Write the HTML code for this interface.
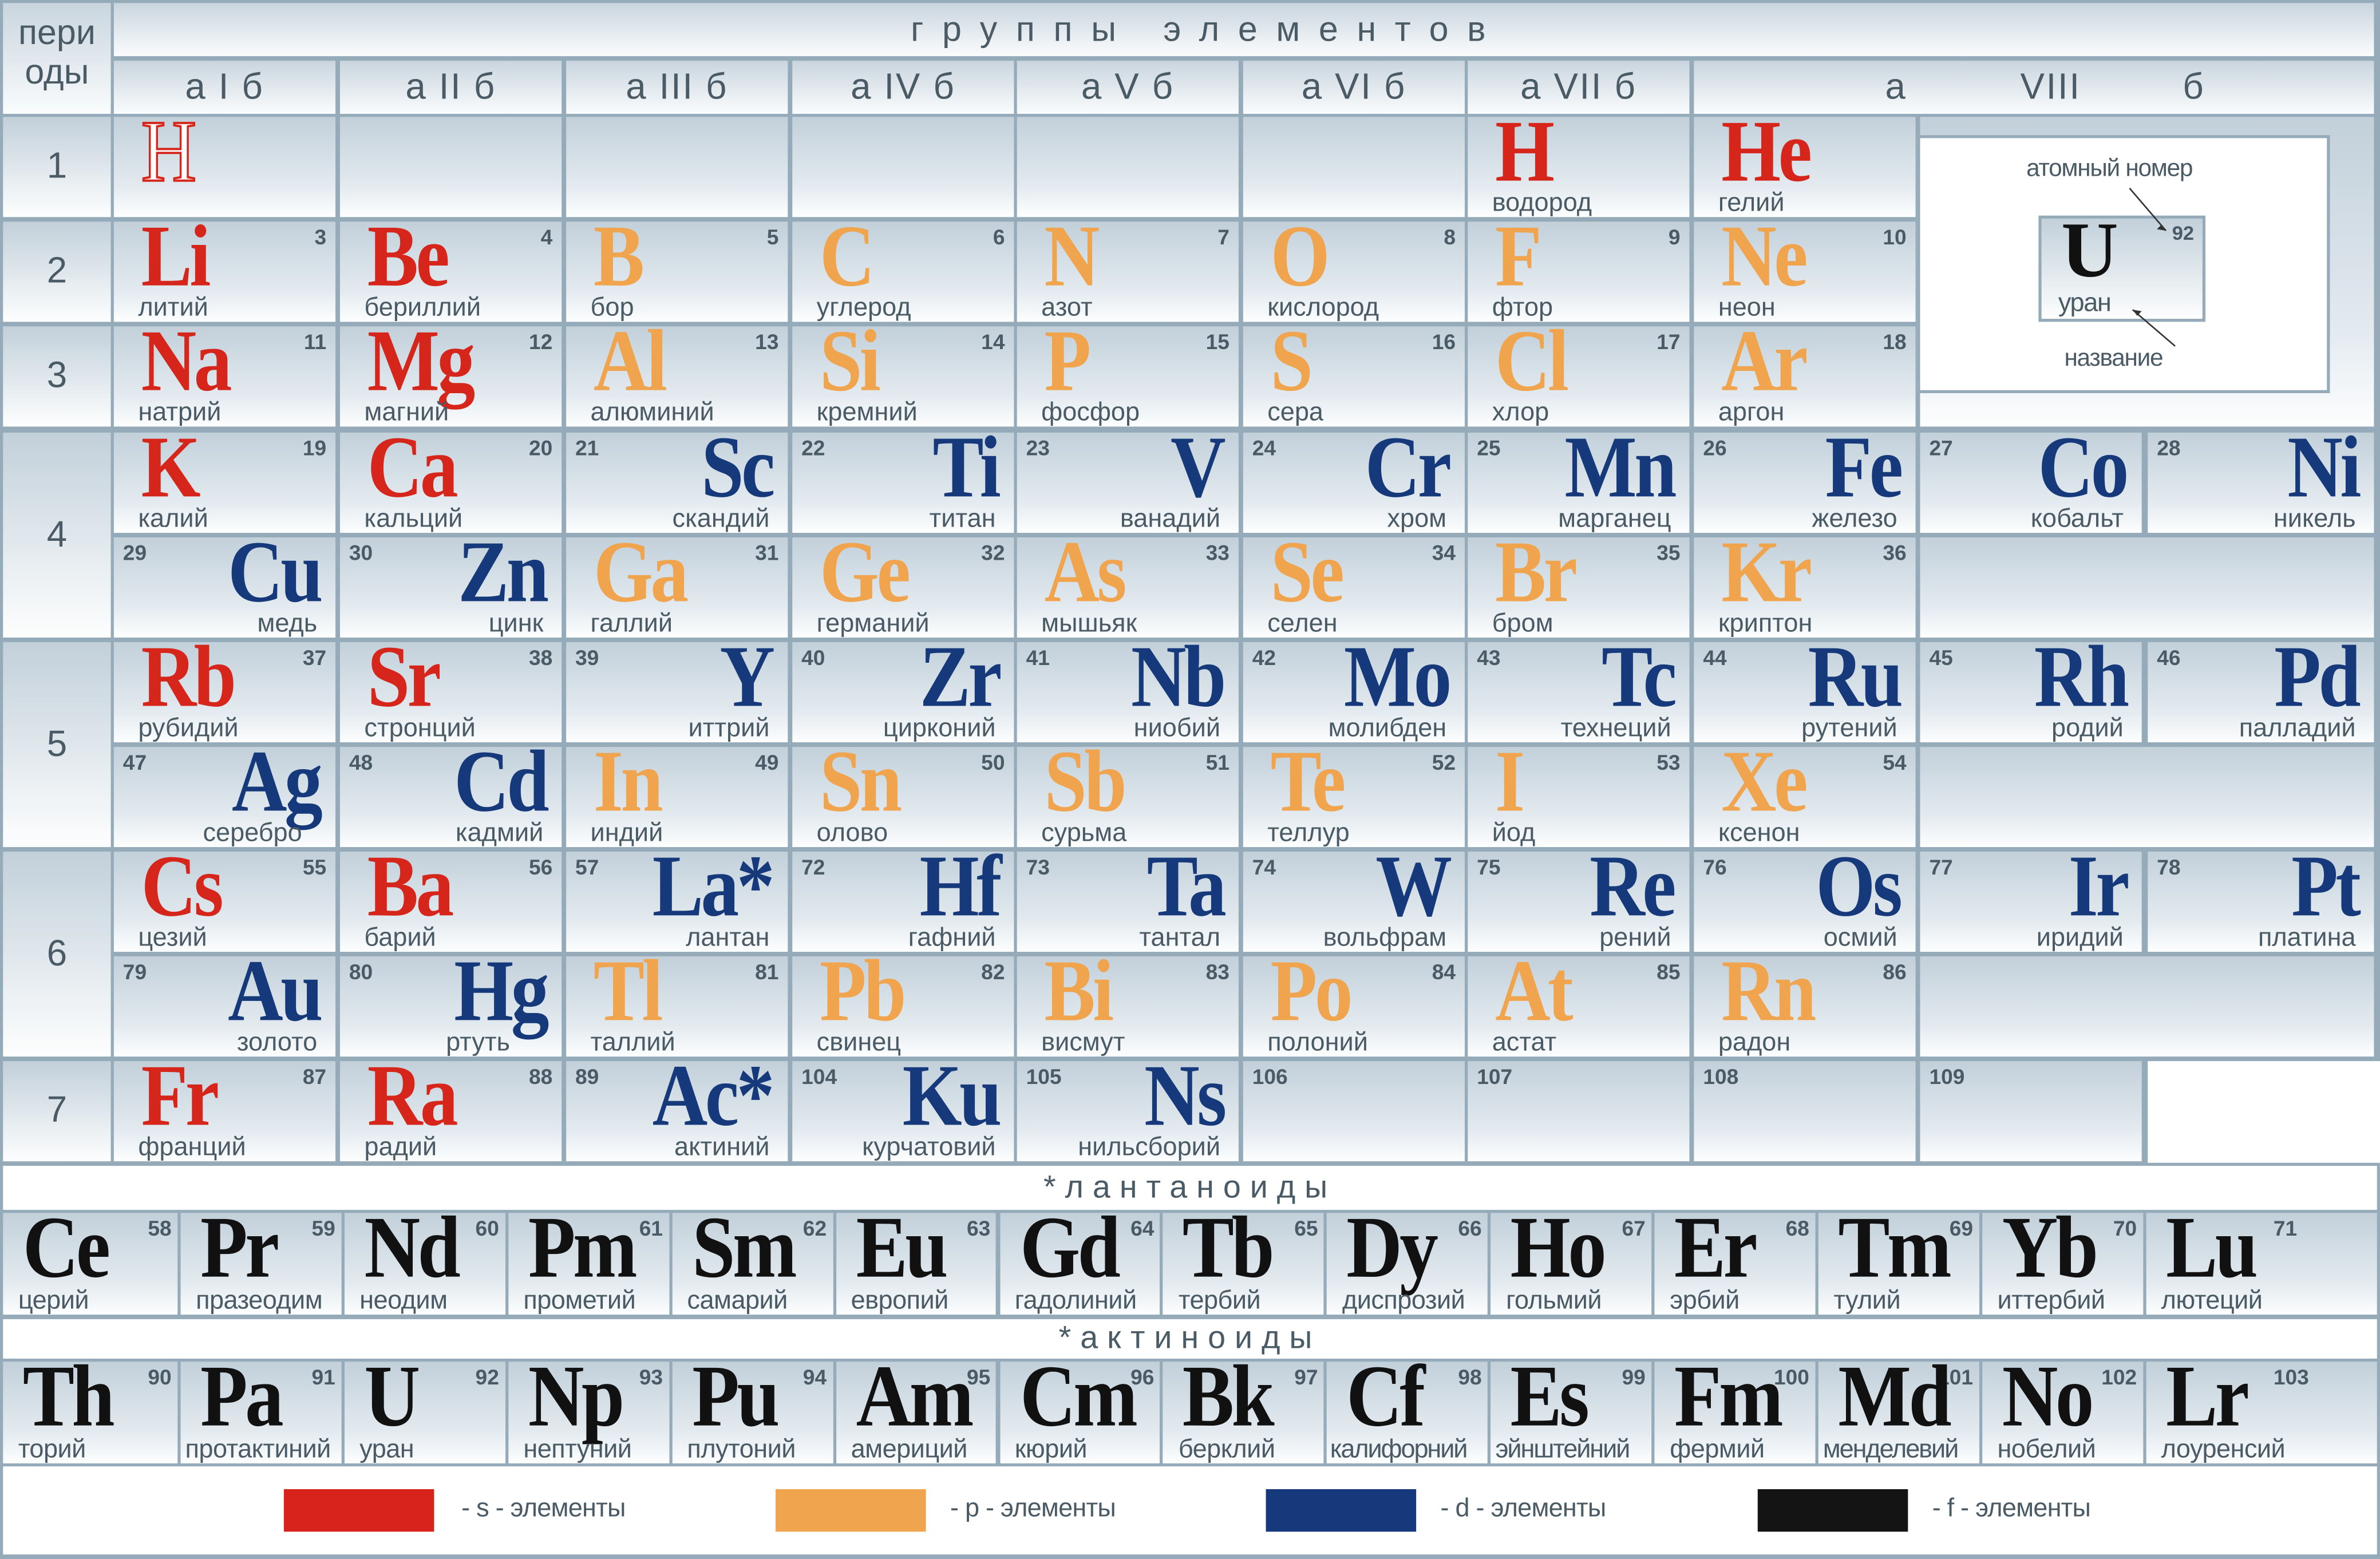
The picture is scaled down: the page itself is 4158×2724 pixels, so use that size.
<!DOCTYPE html>
<html><head><meta charset="utf-8"><style>
html,body{margin:0;padding:0;width:4158px;height:2724px;overflow:hidden;background:#fff}
#p{position:absolute;left:0;top:0;width:1568px;height:1027px;background:#96abba;transform-origin:0 0;transform:scale(2.6518,2.6524);font-family:"Liberation Sans","DejaVu Sans",sans-serif;color:#4a5b66}
.c{position:absolute;width:146px;height:66px;background:linear-gradient(#c2d0da,#e4ebf0 70%,#fdfefe);overflow:hidden}
.x0{left:75px}.x1{left:224px}.x2{left:373px}.x3{left:522px}.x4{left:670px}.x5{left:819px}.x6{left:967px}.x7{left:1116px}.x8{left:1265px}.x9{left:1415px;width:149px}
.y0{top:77px}.y1{top:146px}.y2{top:215px}.y3{top:285px}.y4{top:354px}.y5{top:423px}.y6{top:492px}.y7{top:561px}.y8{top:630px}.y9{top:699px}
.c b{position:absolute;top:3px;font-size:14px;font-weight:bold;color:#4a5b66;line-height:14px}
.c i{position:absolute;top:-6px;font-family:"Liberation Serif",serif;font-style:normal;font-weight:bold;font-size:58px;line-height:58px;letter-spacing:-2px;transform:scaleX(.87)}
.c u{position:absolute;bottom:0px;text-decoration:none;font-size:17px;line-height:19px;letter-spacing:0}
.s b{right:6px}.s i{left:18px;transform-origin:0 0}.s u{left:16px}
.d b{left:6px}.d i{right:10px;transform-origin:100% 0}.d u{right:12px}
.r{color:#d6261c}.o{color:#f0a44e}.bl{color:#15397a}.k{color:#111}
.l{position:absolute;width:105.9px;height:67px;background:linear-gradient(#c2d0da,#e4ebf0 70%,#fdfefe);overflow:hidden}
.l b{position:absolute;right:4px;top:3px;font-size:14px;font-weight:bold;line-height:14px}
.l i{position:absolute;left:13px;top:-6px;font-family:"Liberation Serif",serif;font-style:normal;font-weight:bold;font-size:58px;line-height:58px;letter-spacing:-2px;color:#111;transform:scaleX(.88);transform-origin:0 0}
.l u{position:absolute;left:10px;bottom:0;text-decoration:none;font-size:17px;line-height:19px;letter-spacing:-0.2px;white-space:nowrap}
.per{position:absolute;left:2px;width:71px;background:linear-gradient(#c2d0da,#fdfefe);font-size:24px;display:flex;align-items:center;justify-content:center}
.g{position:absolute;top:40px;height:35px;width:146px;background:linear-gradient(#c9d5de,#fafcfd);font-size:24px;text-align:center;line-height:35px;letter-spacing:1px}
.w{position:absolute;background:#fff}
.lg{position:absolute;top:981px;width:99px;height:28px}
.lt{position:absolute;top:984px;font-size:17px;letter-spacing:-0.3px}
</style></head><body><div id="p">
<div class="per" style="top:2px;height:73px;background:linear-gradient(#c9d5de,#fafcfd);font-size:23px;line-height:26px;text-align:center;display:block;padding-top:6px;box-sizing:border-box">пери<br>оды</div>
<div style="position:absolute;left:75px;top:2px;width:1489px;height:35px;background:linear-gradient(#c9d5de,#fafcfd)"><span style="position:absolute;left:525px;top:0;font-size:23px;line-height:34px;letter-spacing:12.3px;white-space:nowrap">группы элементов</span></div>
<div class="g x0">а I б</div><div class="g x1">а II б</div><div class="g x2">а III б</div><div class="g x3">а IV б</div><div class="g x4">а V б</div><div class="g x5">а VI б</div><div class="g x6">а VII б</div>
<div class="g" style="left:1116px;width:448px;text-align:left"><span style="position:absolute;left:126px">а</span><span style="position:absolute;left:215px">VIII</span><span style="position:absolute;left:322px">б</span></div>
<div class="per" style="top:77px;height:66px">1</div>
<div class="per" style="top:146px;height:66px">2</div>
<div class="per" style="top:215px;height:66px">3</div>
<div class="per" style="top:285px;height:135px">4</div>
<div class="per" style="top:423px;height:135px">5</div>
<div class="per" style="top:561px;height:135px">6</div>
<div class="per" style="top:699px;height:66px">7</div>
<div class="c s x0 y0"><i class="r" style="color:#fff;-webkit-text-stroke:1.5px #d6261c;font-weight:normal">H</i></div>
<div class="c x1 y0"></div><div class="c x2 y0"></div><div class="c x3 y0"></div><div class="c x4 y0"></div><div class="c x5 y0"></div>
<div class="c s x6 y0"><i class="r">H</i><u>водород</u></div>
<div class="c s x7 y0"><i class="r">He</i><u>гелий</u></div>
<div class="c" style="left:1265px;top:77px;width:299px;height:204px"></div>
<div style="position:absolute;left:1263px;top:89px;width:268px;height:166px;background:#fff;border:2px solid #96abba"></div>
<div style="position:absolute;left:1335px;top:103px;font-size:16px;letter-spacing:-0.5px">атомный номер</div>
<div style="position:absolute;left:1343px;top:142px;width:106px;height:66px;border:2px solid #96abba;background:linear-gradient(#c2d0da,#fdfefe)"></div>
<div style="position:absolute;left:1358px;top:140px;font-family:'Liberation Serif',serif;font-weight:bold;font-size:52px;line-height:52px;color:#111">U</div>
<div style="position:absolute;left:1431px;top:146px;font-size:13px;font-weight:bold">92</div>
<div style="position:absolute;left:1356px;top:190px;font-size:17px;letter-spacing:-0.5px">уран</div>
<div style="position:absolute;left:1360px;top:228px;font-size:16px;letter-spacing:-0.5px">название</div>
<svg style="position:absolute;left:1395px;top:120px" width="50" height="110"><path d="M8 4 L32 32" stroke="#333" stroke-width="1" fill="none"/><path d="M32 32 l-6 -1 l3 -3z" fill="#333"/><path d="M38 108 L10 84" stroke="#333" stroke-width="1"/><path d="M10 84 l6 1 l-3 3z" fill="#333"/></svg>
<div class="c s x0 y1"><b>3</b><i class="r">Li</i><u>литий</u></div>
<div class="c s x1 y1"><b>4</b><i class="r">Be</i><u>бериллий</u></div>
<div class="c s x2 y1"><b>5</b><i class="o">B</i><u>бор</u></div>
<div class="c s x3 y1"><b>6</b><i class="o">C</i><u>углерод</u></div>
<div class="c s x4 y1"><b>7</b><i class="o">N</i><u>азот</u></div>
<div class="c s x5 y1"><b>8</b><i class="o">O</i><u>кислород</u></div>
<div class="c s x6 y1"><b>9</b><i class="o">F</i><u>фтор</u></div>
<div class="c s x7 y1"><b>10</b><i class="o">Ne</i><u>неон</u></div>
<div class="c s x0 y2"><b>11</b><i class="r">Na</i><u>натрий</u></div>
<div class="c s x1 y2"><b>12</b><i class="r">Mg</i><u>магний</u></div>
<div class="c s x2 y2"><b>13</b><i class="o">Al</i><u>алюминий</u></div>
<div class="c s x3 y2"><b>14</b><i class="o">Si</i><u>кремний</u></div>
<div class="c s x4 y2"><b>15</b><i class="o">P</i><u>фосфор</u></div>
<div class="c s x5 y2"><b>16</b><i class="o">S</i><u>сера</u></div>
<div class="c s x6 y2"><b>17</b><i class="o">Cl</i><u>хлор</u></div>
<div class="c s x7 y2"><b>18</b><i class="o">Ar</i><u>аргон</u></div>
<div class="c s x0 y3"><b>19</b><i class="r">K</i><u>калий</u></div>
<div class="c s x1 y3"><b>20</b><i class="r">Ca</i><u>кальций</u></div>
<div class="c d x2 y3"><b>21</b><i class="bl">Sc</i><u>скандий</u></div>
<div class="c d x3 y3"><b>22</b><i class="bl">Ti</i><u>титан</u></div>
<div class="c d x4 y3"><b>23</b><i class="bl">V</i><u>ванадий</u></div>
<div class="c d x5 y3"><b>24</b><i class="bl">Cr</i><u>хром</u></div>
<div class="c d x6 y3"><b>25</b><i class="bl">Mn</i><u>марганец</u></div>
<div class="c d x7 y3"><b>26</b><i class="bl">Fe</i><u>железо</u></div>
<div class="c d x8 y3"><b>27</b><i class="bl">Co</i><u>кобальт</u></div>
<div class="c d x9 y3"><b>28</b><i class="bl">Ni</i><u>никель</u></div>
<div class="c d x0 y4"><b>29</b><i class="bl">Cu</i><u>медь</u></div>
<div class="c d x1 y4"><b>30</b><i class="bl">Zn</i><u>цинк</u></div>
<div class="c s x2 y4"><b>31</b><i class="o">Ga</i><u>галлий</u></div>
<div class="c s x3 y4"><b>32</b><i class="o">Ge</i><u>германий</u></div>
<div class="c s x4 y4"><b>33</b><i class="o">As</i><u>мышьяк</u></div>
<div class="c s x5 y4"><b>34</b><i class="o">Se</i><u>селен</u></div>
<div class="c s x6 y4"><b>35</b><i class="o">Br</i><u>бром</u></div>
<div class="c s x7 y4"><b>36</b><i class="o">Kr</i><u>криптон</u></div>
<div class="c x8 y4" style="width:299px"></div>
<div class="c s x0 y5"><b>37</b><i class="r">Rb</i><u>рубидий</u></div>
<div class="c s x1 y5"><b>38</b><i class="r">Sr</i><u>стронций</u></div>
<div class="c d x2 y5"><b>39</b><i class="bl">Y</i><u>иттрий</u></div>
<div class="c d x3 y5"><b>40</b><i class="bl">Zr</i><u>цирконий</u></div>
<div class="c d x4 y5"><b>41</b><i class="bl">Nb</i><u>ниобий</u></div>
<div class="c d x5 y5"><b>42</b><i class="bl">Mo</i><u>молибден</u></div>
<div class="c d x6 y5"><b>43</b><i class="bl">Tc</i><u>технеций</u></div>
<div class="c d x7 y5"><b>44</b><i class="bl">Ru</i><u>рутений</u></div>
<div class="c d x8 y5"><b>45</b><i class="bl">Rh</i><u>родий</u></div>
<div class="c d x9 y5"><b>46</b><i class="bl">Pd</i><u>палладий</u></div>
<div class="c d x0 y6"><b>47</b><i class="bl">Ag</i><u style="right:22px">серебро</u></div>
<div class="c d x1 y6"><b>48</b><i class="bl">Cd</i><u>кадмий</u></div>
<div class="c s x2 y6"><b>49</b><i class="o">In</i><u>индий</u></div>
<div class="c s x3 y6"><b>50</b><i class="o">Sn</i><u>олово</u></div>
<div class="c s x4 y6"><b>51</b><i class="o">Sb</i><u>сурьма</u></div>
<div class="c s x5 y6"><b>52</b><i class="o">Te</i><u>теллур</u></div>
<div class="c s x6 y6"><b>53</b><i class="o">I</i><u>йод</u></div>
<div class="c s x7 y6"><b>54</b><i class="o">Xe</i><u>ксенон</u></div>
<div class="c x8 y6" style="width:299px"></div>
<div class="c s x0 y7"><b>55</b><i class="r">Cs</i><u>цезий</u></div>
<div class="c s x1 y7"><b>56</b><i class="r">Ba</i><u>барий</u></div>
<div class="c d x2 y7"><b>57</b><i class="bl">La*</i><u>лантан</u></div>
<div class="c d x3 y7"><b>72</b><i class="bl">Hf</i><u>гафний</u></div>
<div class="c d x4 y7"><b>73</b><i class="bl">Ta</i><u>тантал</u></div>
<div class="c d x5 y7"><b>74</b><i class="bl">W</i><u>вольфрам</u></div>
<div class="c d x6 y7"><b>75</b><i class="bl">Re</i><u>рений</u></div>
<div class="c d x7 y7"><b>76</b><i class="bl">Os</i><u>осмий</u></div>
<div class="c d x8 y7"><b>77</b><i class="bl">Ir</i><u>иридий</u></div>
<div class="c d x9 y7"><b>78</b><i class="bl">Pt</i><u>платина</u></div>
<div class="c d x0 y8"><b>79</b><i class="bl">Au</i><u>золото</u></div>
<div class="c d x1 y8"><b>80</b><i class="bl">Hg</i><u style="right:34px">ртуть</u></div>
<div class="c s x2 y8"><b>81</b><i class="o">Tl</i><u>таллий</u></div>
<div class="c s x3 y8"><b>82</b><i class="o">Pb</i><u>свинец</u></div>
<div class="c s x4 y8"><b>83</b><i class="o">Bi</i><u>висмут</u></div>
<div class="c s x5 y8"><b>84</b><i class="o">Po</i><u>полоний</u></div>
<div class="c s x6 y8"><b>85</b><i class="o">At</i><u>астат</u></div>
<div class="c s x7 y8"><b>86</b><i class="o">Rn</i><u>радон</u></div>
<div class="c x8 y8" style="width:299px"></div>
<div class="c s x0 y9"><b>87</b><i class="r">Fr</i><u>франций</u></div>
<div class="c s x1 y9"><b>88</b><i class="r">Ra</i><u>радий</u></div>
<div class="c d x2 y9"><b>89</b><i class="bl">Ac*</i><u>актиний</u></div>
<div class="c d x3 y9"><b>104</b><i class="bl">Ku</i><u>курчатовий</u></div>
<div class="c d x4 y9"><b>105</b><i class="bl">Ns</i><u>нильсборий</u></div>
<div class="c d x5 y9"><b>106</b></div>
<div class="c d x6 y9"><b>107</b></div>
<div class="c d x7 y9"><b>108</b></div>
<div class="c d x8 y9"><b>109</b></div>
<div class="w" style="left:1415px;top:699px;width:153px;height:67px"></div>
<div class="w" style="left:2px;top:768px;width:1564px;height:29px;text-align:center;font-size:21px;line-height:30px;letter-spacing:6px">*лантаноиды</div>
<div class="w" style="left:2px;top:869px;width:1564px;height:26px;text-align:center;font-size:21px;line-height:26px;letter-spacing:6px">*актиноиды</div>
<div class="w" style="left:2px;top:966px;width:1564px;height:58px"></div>
<div class="l" style="left:2px;top:799px;width:115px"><b>58</b><i>Ce</i><u>церий</u></div>
<div class="l" style="left:119px;top:799px"><b>59</b><i>Pr</i><u>празеодим</u></div>
<div class="l" style="left:226.9px;top:799px"><b>60</b><i>Nd</i><u>неодим</u></div>
<div class="l" style="left:334.8px;top:799px"><b>61</b><i>Pm</i><u>прометий</u></div>
<div class="l" style="left:442.7px;top:799px"><b>62</b><i>Sm</i><u>самарий</u></div>
<div class="l" style="left:550.6px;top:799px"><b>63</b><i>Eu</i><u>европий</u></div>
<div class="l" style="left:658.5px;top:799px"><b>64</b><i>Gd</i><u>гадолиний</u></div>
<div class="l" style="left:766.4px;top:799px"><b>65</b><i>Tb</i><u>тербий</u></div>
<div class="l" style="left:874.3px;top:799px"><b>66</b><i>Dy</i><u>диспрозий</u></div>
<div class="l" style="left:982.2px;top:799px"><b>67</b><i>Ho</i><u>гольмий</u></div>
<div class="l" style="left:1090.1px;top:799px"><b>68</b><i>Er</i><u>эрбий</u></div>
<div class="l" style="left:1198px;top:799px"><b>69</b><i>Tm</i><u>тулий</u></div>
<div class="l" style="left:1305.9px;top:799px"><b>70</b><i>Yb</i><u>иттербий</u></div>
<div class="l" style="left:1413.8px;top:799px;width:152px"><b style="right:auto;left:84px">71</b><i>Lu</i><u>лютеций</u></div>
<div class="l" style="left:2px;top:897px;width:115px"><b>90</b><i>Th</i><u>торий</u></div>
<div class="l" style="left:119px;top:897px"><b>91</b><i>Pa</i><u style="left:3px">протактиний</u></div>
<div class="l" style="left:226.9px;top:897px"><b>92</b><i>U</i><u>уран</u></div>
<div class="l" style="left:334.8px;top:897px"><b>93</b><i>Np</i><u>нептуний</u></div>
<div class="l" style="left:442.7px;top:897px"><b>94</b><i>Pu</i><u>плутоний</u></div>
<div class="l" style="left:550.6px;top:897px"><b>95</b><i>Am</i><u>америций</u></div>
<div class="l" style="left:658.5px;top:897px"><b>96</b><i>Cm</i><u>кюрий</u></div>
<div class="l" style="left:766.4px;top:897px"><b>97</b><i>Bk</i><u>берклий</u></div>
<div class="l" style="left:874.3px;top:897px"><b>98</b><i>Cf</i><u style="left:2px;letter-spacing:-0.8px">калифорний</u></div>
<div class="l" style="left:982.2px;top:897px"><b>99</b><i>Es</i><u style="left:3px;letter-spacing:-0.8px">эйнштейний</u></div>
<div class="l" style="left:1090.1px;top:897px"><b>100</b><i>Fm</i><u>фермий</u></div>
<div class="l" style="left:1198px;top:897px"><b>101</b><i>Md</i><u style="left:3px;letter-spacing:-0.8px">менделевий</u></div>
<div class="l" style="left:1305.9px;top:897px"><b>102</b><i>No</i><u>нобелий</u></div>
<div class="l" style="left:1413.8px;top:897px;width:152px"><b style="right:auto;left:84px">103</b><i>Lr</i><u>лоуренсий</u></div>
<div class="lg" style="left:187px;background:#d8231c"></div><div class="lt" style="left:304px">- s - элементы</div>
<div class="lg" style="left:511px;background:#f0a44e"></div><div class="lt" style="left:626px">- p - элементы</div>
<div class="lg" style="left:834px;background:#15397a"></div><div class="lt" style="left:949px">- d - элементы</div>
<div class="lg" style="left:1158px;background:#141414"></div><div class="lt" style="left:1273px">- f - элементы</div>
</div></body></html>
